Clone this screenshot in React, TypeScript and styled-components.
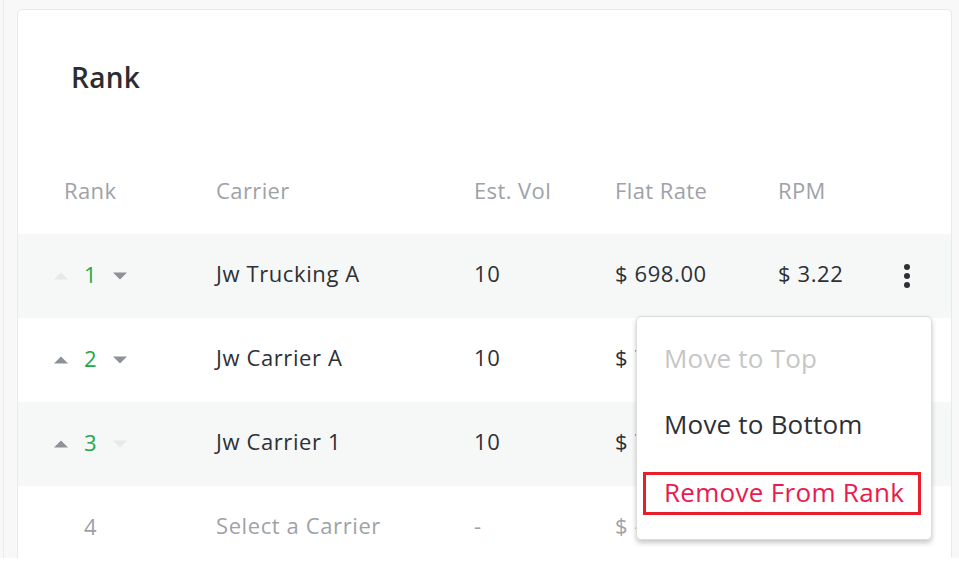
import React from "react";
import styled, { createGlobalStyle } from "styled-components";

type Row = {
    rank: number;
    carrier: string;
    vol: string;
    flat: string;
    rpm: string;
    canUp: boolean;
    canDown: boolean;
    empty?: boolean;
};

const rows: Row[] = [
    { rank: 1, carrier: "Jw Trucking A", vol: "10", flat: "$ 698.00", rpm: "$ 3.22", canUp: false, canDown: true },
    { rank: 2, carrier: "Jw Carrier A", vol: "10", flat: "$ 712.00", rpm: "$ 3.29", canUp: true, canDown: true },
    { rank: 3, carrier: "Jw Carrier 1", vol: "10", flat: "$ 725.00", rpm: "$ 3.35", canUp: true, canDown: false },
    { rank: 4, carrier: "Select a Carrier", vol: "-", flat: "$ -", rpm: "$ -", canUp: false, canDown: false, empty: true },
];

const GlobalStyle = createGlobalStyle`
    html, body {
        margin: 0;
        background: #ffffff;
    }
    body {
        font-family: "Open Sans", "Liberation Sans", sans-serif;
        color: #2d3035;
    }
`;

const Caret: React.FC<{ dir: "up" | "down"; enabled: boolean; hidden?: boolean }> = ({ dir, enabled, hidden }) => (
    <CaretBox $hidden={hidden}>
        <svg width="14" height="8" viewBox="0 0 14 8">
            <polygon points={dir === "up" ? "0,7.5 14,7.5 7,0.5" : "0,0.5 14,0.5 7,7.5"} fill={enabled ? "#8d9198" : "#e6e8ea"} />
        </svg>
    </CaretBox>
);

const Kebab = () => (
    <svg width="24" height="30" viewBox="0 0 24 30">
        <circle cx="12" cy="6" r="3" fill="#2d3035" />
        <circle cx="12" cy="15" r="3" fill="#2d3035" />
        <circle cx="12" cy="24" r="3" fill="#2d3035" />
    </svg>
);

export default function App() {
    return (
        <>
            <GlobalStyle />
            <Page>
                <Shell>
                    <Card>
                        <Title>Rank</Title>
                        <HeaderRow>
                            <HeadCell $indent>Rank</HeadCell>
                            <HeadCell>Carrier</HeadCell>
                            <HeadCell>Est. Vol</HeadCell>
                            <HeadCell>Flat Rate</HeadCell>
                            <HeadCell>RPM</HeadCell>
                            <HeadCell />
                        </HeaderRow>
                        {rows.map((r, i) => (
                            <DataRow key={r.rank} $striped={i % 2 === 0}>
                                <RankCell>
                                    <Caret dir="up" enabled={r.canUp} hidden={r.empty} />
                                    <RankNum $muted={r.empty}>{r.rank}</RankNum>
                                    <Caret dir="down" enabled={r.canDown} hidden={r.empty} />
                                </RankCell>
                                <Cell $muted={r.empty}>{r.carrier}</Cell>
                                <Cell $muted={r.empty}>{r.vol}</Cell>
                                <Cell $muted={r.empty}>{r.flat}</Cell>
                                <Cell $muted={r.empty}>{r.rpm}</Cell>
                                <ActionCell>{i === 0 && <Kebab />}</ActionCell>
                            </DataRow>
                        ))}
                        <Menu>
                            <MenuItem $disabled>Move to Top</MenuItem>
                            <MenuItem>Move to Bottom</MenuItem>
                            <DangerItem>
                                <Highlight>Remove From Rank</Highlight>
                            </DangerItem>
                        </Menu>
                    </Card>
                </Shell>
            </Page>
        </>
    );
}

const Page = styled.div`
    height: 558px;
    padding-left: 3px;
    background: #f8f8f8;
    overflow: hidden;
`;

const Shell = styled.div`
    height: 100%;
    box-sizing: border-box;
    border-left: 1px solid #ececec;
    padding: 9px 7px 0 13px;
`;

const Card = styled.div`
    position: relative;
    background: #ffffff;
    border: 1px solid #e9e9e9;
    border-radius: 5px;
    padding-top: 53px;
    min-height: 620px;
`;

const Title = styled.h2`
    margin: 0 0 55px 53px;
    font-size: 28px;
    line-height: 28px;
    font-weight: 600;
    letter-spacing: 0.3px;
    color: #2b2d31;
`;

const grid = `
    display: grid;
    grid-template-columns: 162px 258px 141px 163px 112px 1fr;
    padding-left: 36px;
    align-items: center;
`;

const HeaderRow = styled.div`
    ${grid};
    height: 88px;
`;

const HeadCell = styled.div<{ $indent?: boolean }>`
    font-size: 22px;
    font-weight: 400;
    letter-spacing: 0.4px;
    color: #9ea2a8;
    padding-left: ${(p) => (p.$indent ? "10px" : "0")};
`;

const DataRow = styled.div<{ $striped: boolean }>`
    ${grid};
    height: 84px;
    background: ${(p) => (p.$striped ? "#f6f7f7" : "#ffffff")};
`;

const RankCell = styled.div`
    display: flex;
    align-items: center;
    gap: 16px;
`;

const CaretBox = styled.span<{ $hidden?: boolean }>`
    display: flex;
    width: 14px;
    visibility: ${(p) => (p.$hidden ? "hidden" : "visible")};
`;

const RankNum = styled.span<{ $muted?: boolean }>`
    font-size: 22px;
    font-weight: 500;
    margin-bottom: 5px;
    color: ${(p) => (p.$muted ? "#9ea2a8" : "#24a84a")};
    min-width: 9px;
`;

const Cell = styled.div<{ $muted?: boolean }>`
    font-size: 22px;
    font-weight: 500;
    letter-spacing: 0.6px;
    margin-bottom: 6px;
    white-space: nowrap;
    color: ${(p) => (p.$muted ? "#9ea2a8" : "#2d3035")};
`;

const ActionCell = styled.div`
    display: flex;
    padding-left: 5px;
`;

const Menu = styled.div`
    position: absolute;
    top: 306px;
    left: 618px;
    width: 296px;
    box-sizing: border-box;
    padding: 10px 0 14px;
    background: #ffffff;
    border: 1px solid #dcdcdc;
    border-radius: 5px;
    box-shadow: 0 3px 5px rgba(0, 0, 0, 0.22);
    display: flex;
    flex-direction: column;
`;

const MenuItem = styled.div<{ $disabled?: boolean }>`
    height: 66px;
    display: flex;
    align-items: center;
    padding: 0 27px;
    font-size: 26px;
    font-weight: 400;
    letter-spacing: 0.2px;
    margin-top: -2px;
    margin-bottom: 2px;
    color: ${(p) => (p.$disabled ? "#c6c6c6" : "#2d3035")};
`;

const DangerItem = styled.div`
    height: 66px;
    display: flex;
    align-items: center;
    padding: 0 10px 0 6px;
`;

const Highlight = styled.span`
    flex: 1;
    height: 43px;
    box-sizing: border-box;
    margin-top: 2px;
    display: flex;
    align-items: center;
    padding: 0 0 3px 18px;
    border: 3px solid #e81f2b;
    font-size: 26px;
    font-weight: 400;
    letter-spacing: 0.3px;
    color: #ea1a4e;
`;
